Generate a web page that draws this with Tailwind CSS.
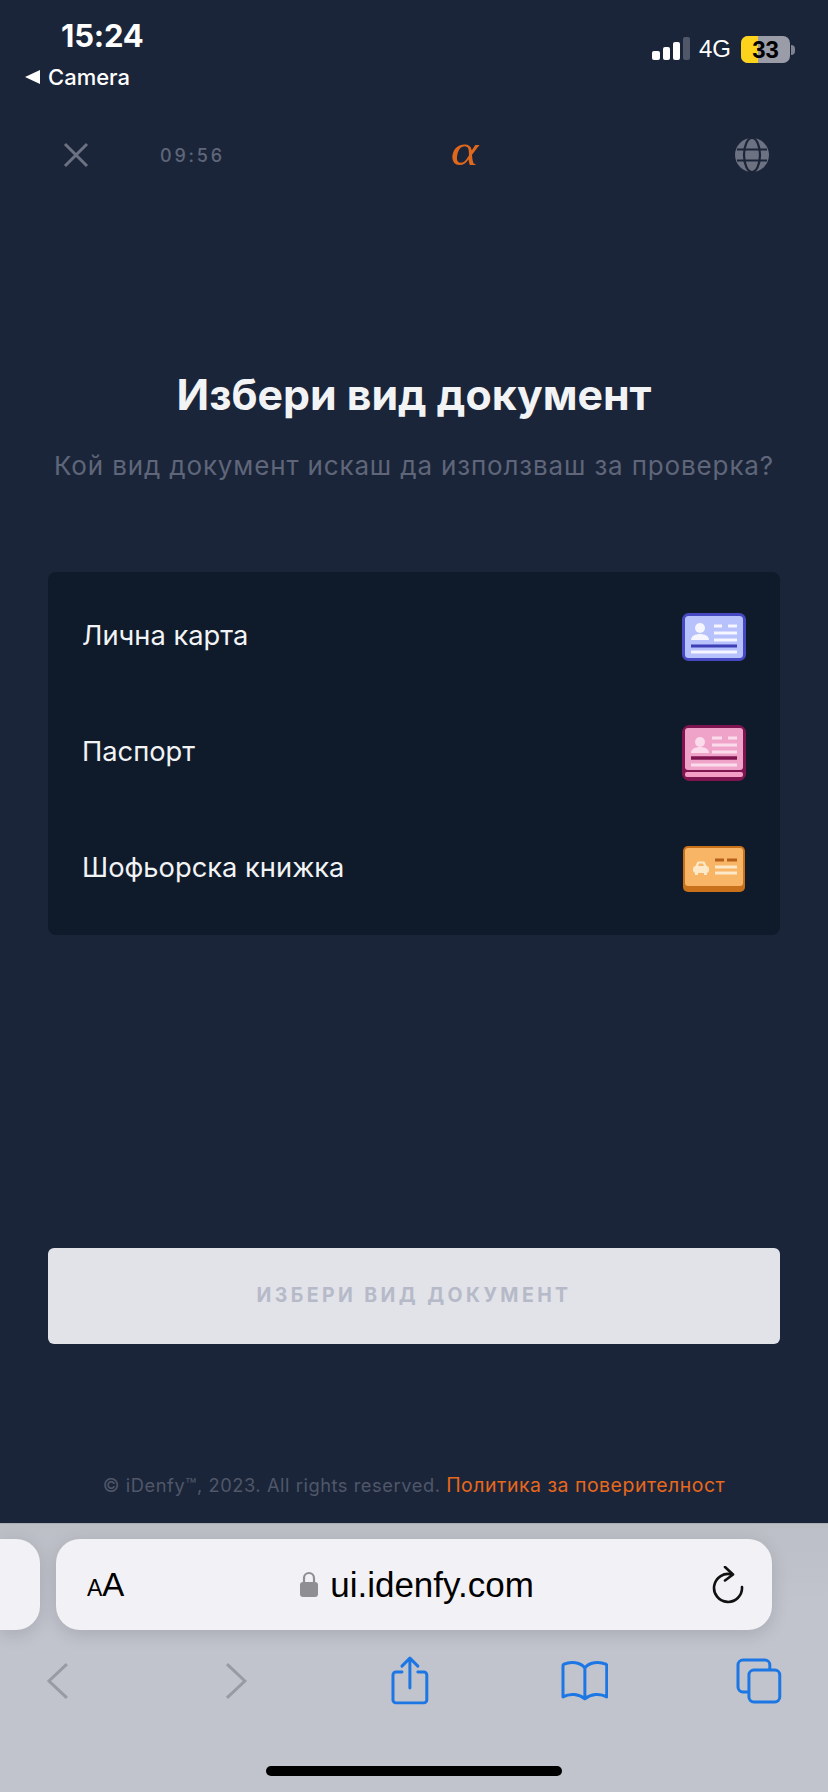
<!DOCTYPE html>
<html lang="bg">
<head>
  <meta charset="UTF-8" />
  <meta name="viewport" content="width=device-width, initial-scale=1" />
  <title>iDenfy</title>
  <script src="https://cdn.jsdelivr.net/npm/@tailwindcss/browser@4"></script>
</head>
<body class="bg-[#1b2539] font-['Inter',sans-serif]">
  <div class="w-[828px] h-[1792px] flex flex-col overflow-hidden">

    <!-- phone status bar -->
    <div class="h-[104px] flex justify-between font-['Liberation_Sans',sans-serif] text-white">
      <div class="pl-[25px] pt-[18px]">
        <div class="pl-[36px] text-[31px] leading-[36px] font-bold font-['Inter',sans-serif] tracking-[-0.2px]">15:24</div>
        <div class="flex items-center gap-[8px] mt-[9px]">
          <svg width="15" height="14" viewBox="0 0 15 14"><path d="M0 7 15 0v14z" fill="#fff"/></svg>
          <span class="text-[22px] leading-[28px] font-['Inter',sans-serif] font-medium">Camera</span>
        </div>
      </div>
      <div class="flex items-start pt-[36px] pr-[33px]">
        <div class="flex items-end gap-[3px] h-[24px]">
          <div class="w-[8px] h-[9px] rounded-[2px] bg-white"></div>
          <div class="w-[7px] h-[13px] rounded-[2px] bg-white"></div>
          <div class="w-[7px] h-[18px] rounded-[2px] bg-white"></div>
          <div class="w-[7px] h-[23px] rounded-[2px] bg-[#4f5769]"></div>
        </div>
        <div class="ml-[9px] text-[24px] leading-[26px] text-white">4G</div>
        <div class="ml-[10px] relative w-[49px] h-[27px] rounded-[7px] overflow-hidden bg-[#9a9da8]">
          <div class="w-[17px] h-full bg-[#fdd31c]"></div>
          <div class="absolute inset-0 text-center text-[24px] leading-[27px] font-bold text-black">33</div>
        </div>
        <div class="w-[4px] h-[10px] mt-[9px] ml-[1px] rounded-r-full bg-[#7f8390]"></div>
      </div>
    </div>

    <!-- app header -->
    <header class="h-[102px] relative flex items-center pl-[63px] pr-[59px]">
      <svg width="26" height="26" viewBox="0 0 26 26"><path d="M2 2 24 24M24 2 2 24" stroke="#6c7282" stroke-width="3"/></svg>
      <span class="ml-[71px] text-[18px] font-medium tracking-[2.8px] text-[#5f6679]">09:56</span>
      <span class="absolute left-[453px] top-[22px] text-[44px] leading-[50px] italic font-['Liberation_Serif',serif] text-[#e0681c] scale-x-[1.2]">α</span>
      <svg width="34" height="34" viewBox="0 0 34 34" class="ml-auto">
        <circle cx="17" cy="17" r="17" fill="#6c7282"/>
        <g fill="none" stroke="#1b2539" stroke-width="2.2">
          <path d="M2 11.5h30M2 22.5h30"/>
          <ellipse cx="17" cy="17" rx="8" ry="17"/>
        </g>
      </svg>
    </header>

    <main class="flex-1 flex flex-col px-[48px]">
      <h1 class="mt-[161px] text-center text-[42.8px] leading-[56px] font-bold text-[#f2f3f5]">Избери вид документ</h1>
      <p class="mt-[27px] text-center text-[26px] leading-[32px] tracking-[0.85px] text-[#5f6679] whitespace-nowrap">Кой вид документ искаш да използваш за проверка?</p>

      <div class="mt-[90px] h-[363px] rounded-[8px] bg-[#0f1b2b] flex flex-col justify-center pl-[34px] pr-[34px] pb-[2px]">
        <div class="h-[116px] flex items-center justify-between text-[27.3px] text-[#f2f3f5]">
          <span>Лична карта</span>
          <svg width="64" height="48" viewBox="0 0 64 48">
            <rect x="1.5" y="1.5" width="61" height="45" rx="5" fill="#b7c1fb" stroke="#4749c2" stroke-width="3"/>
            <circle cx="18" cy="15" r="5" fill="#f5f6ff"/>
            <path d="M9 27c0-8 18-8 18 0z" fill="#f5f6ff"/>
            <path d="M32 13h8M46 13h9M32 20h23M32 27h23" stroke="#f5f6ff" stroke-width="3"/>
            <path d="M9 33h46" stroke="#3d3fb6" stroke-width="3"/>
            <path d="M9 39h46" stroke="#f5f6ff" stroke-width="3"/>
          </svg>
        </div>
        <div class="h-[116px] flex items-center justify-between text-[27.3px] text-[#f2f3f5]">
          <span>Паспорт</span>
          <svg width="64" height="56" viewBox="0 0 64 56">
            <rect x="1.5" y="1.5" width="61" height="53" rx="6" fill="#7f1550" stroke="#7f1550" stroke-width="3"/>
            <rect x="3" y="47" width="58" height="5" rx="2" fill="#f29cc6"/>
            <rect x="3" y="3" width="58" height="42" rx="3" fill="#f0a3c9"/>
            <circle cx="18" cy="17" r="5" fill="#fbdcec"/>
            <path d="M9 28c0-8 18-8 18 0z" fill="#fbdcec"/>
            <path d="M30 13h10M46 13h9M30 20h25M30 27h25" stroke="#fbdcec" stroke-width="3"/>
            <path d="M9 33h46" stroke="#7f1550" stroke-width="3.5"/>
            <path d="M9 40h46" stroke="#fbdcec" stroke-width="3"/>
          </svg>
        </div>
        <div class="h-[116px] flex items-center justify-between text-[27.3px] text-[#f2f3f5]">
          <span>Шофьорска книжка</span>
          <svg width="64" height="48" viewBox="0 0 64 48">
            <rect x="1" y="1" width="62" height="46" rx="5" fill="#c8701a"/>
            <rect x="3" y="3" width="58" height="38" rx="3" fill="#f8b565"/>
            <rect x="11" y="21" width="16" height="7" rx="3" fill="#fde8c8"/>
            <path d="M13 22l2-4.500a1.500 1.500 0 0 1 1.500-1h5a1.500 1.500 0 0 1 1.500 1l2 4.500z" fill="#fde8c8"/>
            <path d="M16 21l1-2.500h4l1 2.500z" fill="#f8b565"/>
            <path d="M13 29h3M22 29h3" stroke="#fde8c8" stroke-width="2"/>
            <path d="M33 15h9M45 15h10" stroke="#b5601a" stroke-width="3"/>
            <path d="M33 22h22M33 28h22" stroke="#fde8c8" stroke-width="3"/>
          </svg>
        </div>
      </div>

      <button class="mt-[313px] h-[96px] rounded-[6px] bg-[#e1e3e9] text-[19.5px] font-bold tracking-[3.4px] text-[#b6bac8]">ИЗБЕРИ ВИД ДОКУМЕНТ</button>

      <p class="mt-[128px] text-center text-[18.3px] leading-[26px] tracking-[0.55px] text-[#4f5769] whitespace-nowrap">© iDenfy™, 2023. All rights reserved. <span class="text-[19.4px] text-[#e8681c]">Политика за поверителност</span></p>
    </main>

    <!-- safari bottom bar -->
    <div class="h-[269px] border-t-[1px] border-[#a9adb5] bg-[linear-gradient(#bcbfc6,#c1c3cd_30%)] flex flex-col relative">
      <div class="h-[15px]"></div>
      <div class="flex h-[91px] gap-[16px]">
        <div class="w-[40px] rounded-r-[24px] bg-[#f2f2f6] shadow-[0_4px_18px_rgba(0,0,0,0.13)]"></div>
        <div class="w-[716px] rounded-[24px] bg-[#f2f2f6] shadow-[0_4px_18px_rgba(0,0,0,0.13)] flex items-center pl-[31px] pr-[28px] font-['Liberation_Sans',sans-serif] text-black">
          <span class="w-[39px] flex items-baseline"><span class="text-[23px]">A</span><span class="text-[33px]">A</span></span>
          <div class="flex-1 flex items-center justify-center gap-[12px] mr-[4px]">
            <svg width="18" height="27" viewBox="0 0 18 27"><path d="M4 12V7a5 5 0 0 1 10 0v5" fill="none" stroke="#8e8e93" stroke-width="2.2"/><rect y="11" width="18" height="15" rx="3" fill="#8e8e93"/></svg>
            <span class="text-[35px] leading-[40px]">ui.idenfy.com</span>
          </div>
          <svg width="32" height="38" viewBox="0 0 32 38"><path d="M20 8.500A14 14 0 1 0 30 21" fill="none" stroke="#111" stroke-width="2.6" stroke-linecap="round"/><path d="M13 1l8 7.500-8 6" fill="none" stroke="#111" stroke-width="2.6" stroke-linecap="round" stroke-linejoin="round"/></svg>
        </div>
      </div>
      <div class="h-[108px] px-[46px] flex items-center justify-start">
        <svg width="24" height="38" viewBox="0 0 24 38" class="mt-[-7px]"><path d="M21 2 3 19l18 17" fill="none" stroke="#989ba3" stroke-width="3"/></svg>
        <svg width="24" height="38" viewBox="0 0 24 38" class="mt-[-7px] ml-[154px]"><path d="M3 2l18 17L3 36" fill="none" stroke="#989ba3" stroke-width="3"/></svg>
        <svg width="38" height="50" viewBox="0 0 38 50" class="mt-[-7px] ml-[143px]"><path d="M11 16H5a3 3 0 0 0-3 3v25a3 3 0 0 0 3 3h28a3 3 0 0 0 3-3V19a3 3 0 0 0-3-3h-6M19 32V2M11 10l8-8 8 8" fill="none" stroke="#1c77e4" stroke-width="3" stroke-linecap="round" stroke-linejoin="round"/></svg>
        <svg width="48" height="42" viewBox="0 0 48 42" class="mt-[-7px] ml-[132px]"><path d="M24 8C20 2 10 1 3 4a2 2 0 0 0-1 2v31c7-4 16-3 22 2 6-5 15-6 22-2V6a2 2 0 0 0-1-2c-7-3-17-2-21 4zv31" fill="none" stroke="#1c77e4" stroke-width="3" stroke-linejoin="round"/></svg>
        <svg width="46" height="46" viewBox="0 0 46 46" class="mt-[-7px] ml-[128px]"><path d="M12 34H7a5 5 0 0 1-5-5V7a5 5 0 0 1 5-5h22a5 5 0 0 1 5 5v4" fill="none" stroke="#1c77e4" stroke-width="3"/><rect x="13" y="12" width="31" height="32" rx="5" fill="none" stroke="#1c77e4" stroke-width="3"/></svg>
      </div>
      <div class="mt-[28px] mx-auto w-[296px] h-[10px] rounded-full bg-black"></div>
    </div>
  </div>
</body>
</html>
